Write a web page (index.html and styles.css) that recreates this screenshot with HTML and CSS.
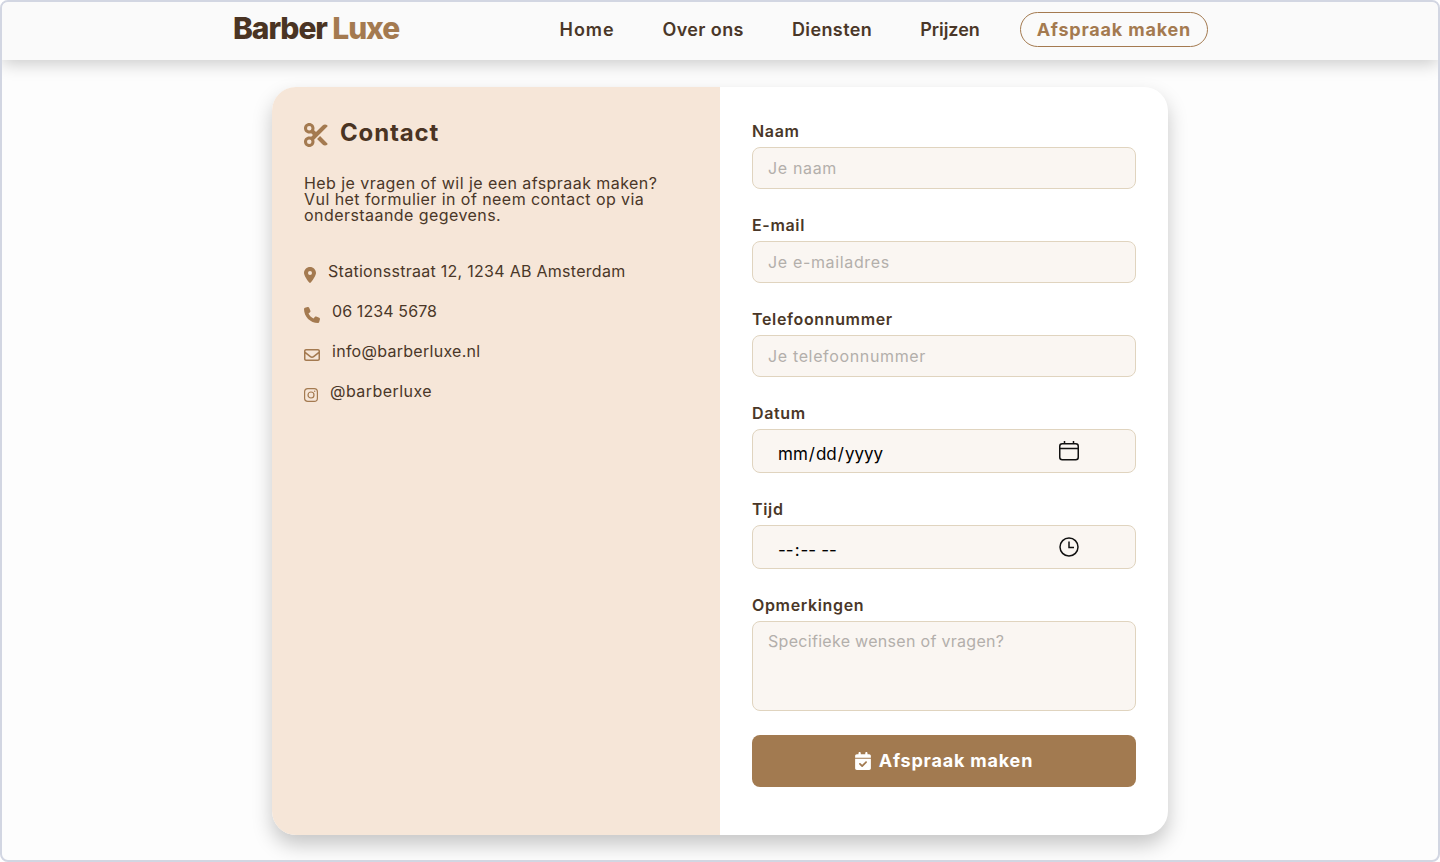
FILE: index.html
```html
<!DOCTYPE html>
<html lang="nl">
<head>
<meta charset="utf-8">
<title>Barber Luxe</title>
<link rel="stylesheet" href="styles.css">
</head>
<body>
<div class="window">
  <header class="nav">
    <a class="logo" href="#">Barber <span class="logo-accent">Luxe</span></a>
    <nav class="links">
      <a class="wide" href="#">Home</a>
      <a href="#">Over ons</a>
      <a href="#">Diensten</a>
      <a class="tight" href="#">Prijzen</a>
      <a class="cta" href="#">Afspraak maken</a>
    </nav>
  </header>
  <main class="main">
    <section class="card">
      <aside class="info">
        <h1 class="title">
          <svg class="scissors" viewBox="0 0 512 512"><path d="M256 192l-39.500-39.500c4.900-12.600 7.500-26.200 7.500-40.500C224 50.100 173.900 0 112 0S0 50.100 0 112s50.100 112 112 112c14.300 0 27.900-2.700 40.500-7.500L192 256l-39.500 39.500c-12.600-4.900-26.200-7.500-40.500-7.500C50.100 288 0 338.100 0 400s50.100 112 112 112s112-50.100 112-112c0-14.300-2.700-27.900-7.500-40.500L499.200 76.800c7.100-7.100 7.100-18.500 0-25.600c-28.300-28.300-74.100-28.300-102.400 0L256 192zm22.600 150.600L396.800 460.800c28.300 28.300 74.100 28.300 102.400 0c7.100-7.100 7.100-18.500 0-25.600L342.600 278.600l-64 64zM64 112a48 48 0 1 1 96 0 48 48 0 1 1 -96 0zm48 240a48 48 0 1 1 0 96 48 48 0 1 1 0-96z"/></svg>
          Contact
        </h1>
        <p class="intro">Heb je vragen of wil je een afspraak maken?<br>Vul het formulier in of neem contact op via<br>onderstaande gegevens.</p>
        <ul class="contacts">
          <li><svg class="ic pin" viewBox="0 0 384 512"><path d="M215.7 499.2C267 435 384 279.4 384 192C384 86 298 0 192 0S0 86 0 192c0 87.4 117 243 168.3 307.2c12.3 15.3 35.1 15.3 47.4 0zM192 128a64 64 0 1 1 0 128 64 64 0 1 1 0-128z"/></svg>Stationsstraat 12, 1234 AB Amsterdam</li>
          <li><svg class="ic phone" viewBox="0 0 512 512"><path d="M164.9 24.6c-7.7-18.6-28-28.5-47.4-23.2l-88 24C12.1 30.2 0 46 0 64C0 311.4 200.6 512 448 512c18 0 33.8-12.1 38.6-29.5l24-88c5.3-19.4-4.6-39.7-23.2-47.4l-96-40c-16.3-6.8-35.2-2.1-46.3 11.6L304.7 368C234.3 334.7 177.3 277.7 144 207.3L193.3 167c13.7-11.2 18.4-30 11.6-46.3l-40-96z"/></svg><span class="num">06 1234 5678</span></li>
          <li><svg class="ic mail" viewBox="0 0 512 512"><path d="M64 112c-8.800 0-16 7.200-16 16v22.100L220.500 291.700c20.700 17 50.400 17 71.100 0L464 150.100V128c0-8.800-7.200-16-16-16H64zM48 212.200V384c0 8.800 7.200 16 16 16H448c8.800 0 16-7.200 16-16V212.200L322 328.800c-38.400 31.500-93.700 31.500-132 0L48 212.200zM0 128C0 92.700 28.700 64 64 64H448c35.300 0 64 28.700 64 64V384c0 35.300-28.700 64-64 64H64c-35.300 0-64-28.700-64-64V128z"/></svg>info@barberluxe.nl</li>
          <li><svg class="insta" viewBox="0 0 14 14" fill="none" stroke="#a47a50" stroke-width="1.200"><rect x=".6" y=".6" width="12.800" height="12.800" rx="3.200"/><circle cx="7" cy="7" r="3"/><circle cx="10.700" cy="3.300" r=".7" fill="#a47a50" stroke="none"/></svg><span class="handle">@barberluxe</span></li>
        </ul>
      </aside>
      <form class="form">
        <label class="field"><span class="lbl">Naam</span><input class="input" type="text" placeholder="Je naam"></label>
        <label class="field"><span class="lbl">E-mail</span><input class="input" type="email" placeholder="Je e-mailadres"></label>
        <label class="field"><span class="lbl">Telefoonnummer</span><input class="input" type="tel" placeholder="Je telefoonnummer"></label>
        <label class="field"><span class="lbl">Datum</span>
          <span class="control">
            <input class="native" type="date">
            <svg class="picker" viewBox="0 0 20 20" fill="none" stroke="#111" stroke-width="1.500"><rect x=".75" y="2.750" width="18.500" height="16" rx="2.500"/><path d="M.75 7.500h18.500M5.500 0v3M14.500 0v3"/></svg>
          </span>
        </label>
        <label class="field"><span class="lbl">Tijd</span>
          <span class="control">
            <input class="native" type="time">
            <svg class="picker" viewBox="0 0 20 20" fill="none" stroke="#111" stroke-width="1.500"><circle cx="10" cy="10" r="9"/><path d="M10 4.500V10.500H15"/></svg>
          </span>
        </label>
        <label class="field"><span class="lbl">Opmerkingen</span><textarea class="input area" placeholder="Specifieke wensen of vragen?"></textarea></label>
        <button class="submit" type="button">
          <svg class="cal" viewBox="0 0 448 512"><path d="M128 0c17.700 0 32 14.300 32 32V64H288V32c0-17.700 14.300-32 32-32s32 14.300 32 32V64h48c26.500 0 48 21.500 48 48v48H0V112C0 85.500 21.500 64 48 64H96V32c0-17.700 14.300-32 32-32zM0 192H448V464c0 26.500-21.500 48-48 48H48c-26.500 0-48-21.500-48-48V192zM329 305c9.400-9.400 9.400-24.600 0-33.900s-24.600-9.400-33.900 0l-95 95-47-47c-9.400-9.400-24.600-9.400-33.900 0s-9.400 24.600 0 33.900l64 64c9.400 9.400 24.600 9.400 33.900 0L329 305z"/></svg>
          <span class="submit-text">Afspraak maken</span>
        </button>
      </form>
    </section>
  </main>
</div>
</body>
</html>
```
FILE: styles.css
```css
* { box-sizing: border-box; }
html, body { margin: 0; height: 100%; background: #fff; }
body { font-family: Inter, "Noto Sans", sans-serif; color: #4a3728; }
a { color: inherit; text-decoration: none; }

.window {
  height: 862px;
  border: 2px solid #d2d6e2;
  border-radius: 8px;
  overflow: hidden;
  background: #fdfdfd;
}

.nav {
  position: relative;
  z-index: 2;
  height: 58px;
  padding: 0 230px 0 231px;
  display: flex;
  align-items: center;
  justify-content: space-between;
  background: #fafafa;
  box-shadow: 0 4px 16px rgba(0, 0, 0, .2);
}
.logo { font-size: 30px; font-weight: 800; letter-spacing: -1.1px; color: #4a3423; margin-top: -6px; }
.logo-accent { color: #a47a50; }
.links { display: flex; align-items: center; gap: 48px; font-size: 18px; font-weight: 600; letter-spacing: .4px; margin-top: -4px; }
.wide { letter-spacing: .9px; }
.tight { letter-spacing: -.05px; }
.cta {
  margin-left: -8px;
  padding: 6px 16px;
  border: 1px solid #a47a50;
  border-radius: 18px;
  color: #a47a50;
  font-weight: 700;
  letter-spacing: .8px;
}

.main { display: flex; justify-content: center; padding-top: 27px; }
.card {
  width: 896px;
  height: 748px;
  display: flex;
  border-radius: 24px;
  overflow: hidden;
  background: #fff;
  box-shadow: 0 10px 20px rgba(0, 0, 0, .22);
}
.info { width: 448px; padding: 32px; background: #f6e6d8; }
.title { margin: 0 0 24px; display: flex; gap: 12px; font-size: 24px; font-weight: 700; line-height: 28px; height: 32px; color: #4a3423; letter-spacing: .85px; }
.scissors { width: 24px; height: 24px; margin-top: 4px; fill: #a47a50; flex: none; }
.intro { margin: 0; font-size: 16px; line-height: 16px; letter-spacing: .44px; }
.contacts { list-style: none; margin: 36px 0 0; padding: 0; display: flex; flex-direction: column; gap: 16px; font-size: 16px; line-height: 24px; letter-spacing: .28px; }
.contacts li { display: flex; align-items: flex-start; gap: 12px; }
.num { letter-spacing: .1px; }
.handle { letter-spacing: .45px; }
.ic { fill: #a47a50; flex: none; }
.pin { width: 12px; height: 16px; margin-top: 8px; }
.phone { width: 16px; height: 16px; margin-top: 8px; }
.mail { width: 16px; height: 16px; margin-top: 8px; }
.insta { width: 14px; height: 14px; margin-top: 9px; flex: none; }

.form { flex: 1; padding: 32px; display: flex; flex-direction: column; gap: 24px; }
.field { display: flex; flex-direction: column; gap: 4px; }
.lbl { font-size: 16px; line-height: 24px; font-weight: 600; letter-spacing: .65px; }
.input, .control {
  display: block;
  width: 100%;
  height: 42px;
  padding: 0 15px;
  border: 1px solid #e0d4bf;
  border-radius: 8px;
  background: #faf6f2;
  font: 400 16px Inter, "Noto Sans", sans-serif;
  letter-spacing: .65px;
  color: #000;
  outline: none;
}
.input::placeholder { color: #b3afab; opacity: 1; }
.control { display: flex; align-items: center; height: 44px; padding: 0 56px 0 24px; }
.native {
  flex: 1;
  min-width: 0;
  padding: 6px 0 0;
  border: 0;
  background: none;
  outline: none;
  font: 400 17px Inter, "Noto Sans", sans-serif;
  color: #000;
}
.native::-webkit-calendar-picker-indicator { display: none; }
.picker { width: 20px; height: 20px; flex: none; margin-top: -1px; }
.area { height: 90px; padding: 9px 15px; resize: none; letter-spacing: .3px; }
.submit {
  height: 52px;
  display: flex;
  align-items: center;
  justify-content: center;
  gap: 8px;
  border: 0;
  border-radius: 8px;
  background: #a27a50;
  color: #fff;
  font: 700 18px Inter, "Noto Sans", sans-serif;
  letter-spacing: .8px;
}
.submit-text { margin-top: -2px; }
.cal { width: 16px; height: 18px; fill: #fff; }
```
